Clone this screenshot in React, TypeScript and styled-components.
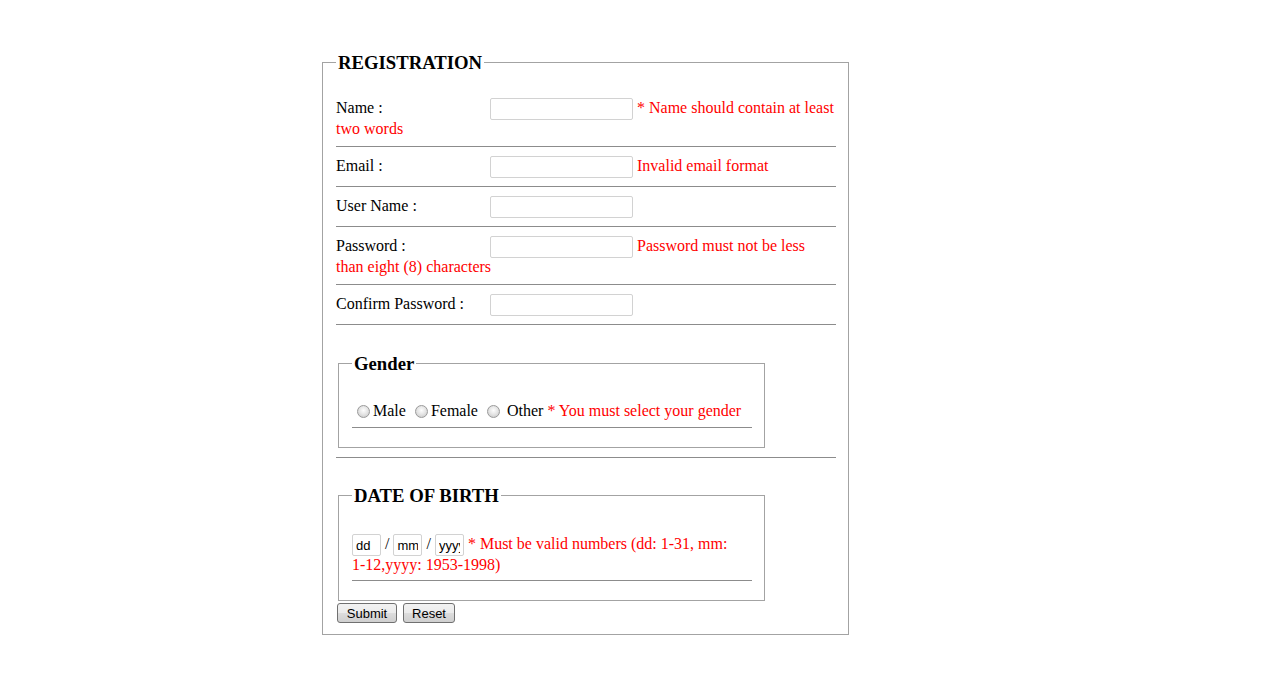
import { createGlobalStyle } from 'styled-components'
import styled from 'styled-components'

const GlobalStyle = createGlobalStyle`
  body {
    margin: 0;
    background: #fff;
    font-family: 'Liberation Serif', 'Times New Roman', serif;
    font-size: 16px;
    color: #000;
  }
`

const Page = styled.div`
  padding: 52px 0 40px 322px;
`

const Fieldset = styled.fieldset<{ $inner?: boolean }>`
  margin: ${p => (p.$inner ? '0 2px' : '0')};
  width: ${p => (p.$inner ? '400px' : '500px')};
  border: 1px solid #a3a3a3;
  padding: ${p => (p.$inner ? '0 12px 19px 13px' : '16px 12px 11px 13px')};
  line-height: 18px;
`

const Legend = styled.legend`
  padding: 0 2px;
  font-size: 18.72px;
  font-weight: bold;
  line-height: 21px;
`

const Row = styled.div`
  padding: 9px 0 8px;
  border-bottom: 1px solid #8c8c8c;
`

const GroupRow = styled.div<{ $top: number; $last?: boolean }>`
  padding: ${p => p.$top}px 0 ${p => (p.$last ? '0' : '9px')};
  border-bottom: ${p => (p.$last ? 'none' : '1px solid #8c8c8c')};
`

const GroupLine = styled.div<{ $top: number; $bottom: number }>`
  margin-top: ${p => p.$top}px;
  padding-bottom: ${p => p.$bottom}px;
  border-bottom: 1px solid #8c8c8c;
`

const Label = styled.label`
  display: inline-block;
  width: 154px;
`

const TextInput = styled.input`
  box-sizing: border-box;
  width: 143px;
  height: 22px;
  margin: 0;
  padding: 0 3px;
  border: 1px solid #d2d2d2;
  border-radius: 2px;
  vertical-align: middle;
  font: 13px 'Liberation Sans', Arial, sans-serif;
`

const DateInput = styled(TextInput)`
  width: 29px;
  padding: 0 3px;
`

const Error = styled.span`
  color: #f00;
`

const NoWrap = styled.span`
  white-space: nowrap;
`

const Radio = styled.input`
  appearance: none;
  box-sizing: border-box;
  width: 13px;
  height: 13px;
  margin: 0 3px 0 5px;
  border: 1px solid #9a9a9a;
  border-radius: 50%;
  background: radial-gradient(circle at 50% 40%, #fdfdfd 0%, #e6e6e6 45%, #c4c4c4 100%);
  vertical-align: middle;
  position: relative;
  top: -1px;
`

const ButtonBar = styled.div`
  display: flex;
  gap: 6px;
  padding: 2px 0 0 1px;
`

const Button = styled.button<{ $w: number }>`
  box-sizing: border-box;
  width: ${p => p.$w}px;
  height: 20px;
  padding: 0;
  border: 1px solid #707070;
  border-radius: 3px;
  background: linear-gradient(#f2f2f2 0%, #ebebeb 50%, #dddddd 51%, #cfcfcf 100%);
  font: 13px 'Liberation Sans', Arial, sans-serif;
  color: #000;
`

const fields = [
  { label: 'Name :', error: '* Name should contain at least two words', type: 'text' },
  { label: 'Email :', error: 'Invalid email format', type: 'text' },
  { label: 'User Name :', error: '', type: 'text' },
  { label: 'Password :', error: 'Password must not be less than eight (8) characters', type: 'password' },
  { label: 'Confirm Password :', error: '', type: 'password' }
]

export default function App() {
  return (
    <Page>
      <GlobalStyle />
      <form onSubmit={e => e.preventDefault()}>
        <Fieldset>
          <Legend>REGISTRATION</Legend>
          {fields.map(f => (
            <Row key={f.label}>
              <Label>{f.label}</Label>
              <TextInput type={f.type} />
              {f.error && (
                <>
                  {' '}
                  <Error>{f.error}</Error>
                </>
              )}
            </Row>
          ))}

          <GroupRow $top={28}>
            <Fieldset $inner>
              <Legend>Gender</Legend>
              <GroupLine $top={28} $bottom={7}>
                <Radio type="radio" name="gender" id="male" />
                <label htmlFor="male">Male</label>{' '}
                <Radio type="radio" name="gender" id="female" />
                <label htmlFor="female">Female</label>{' '}
                <Radio type="radio" name="gender" id="other" />{' '}
                <label htmlFor="other">Other</label>{' '}
                <Error>* You must select your gender</Error>
              </GroupLine>
            </Fieldset>
          </GroupRow>

          <GroupRow $top={27} $last>
            <Fieldset $inner>
              <Legend>DATE OF BIRTH</Legend>
              <GroupLine $top={28} $bottom={6}>
                <DateInput defaultValue="dd" /> / <DateInput defaultValue="mm" /> /{' '}
                <DateInput defaultValue="yyyy" />{' '}
                <Error>
                  * Must be valid numbers (dd: 1-31, mm: <NoWrap>1-12,yyyy:</NoWrap> 1953-1998)
                </Error>
              </GroupLine>
            </Fieldset>
          </GroupRow>

          <ButtonBar>
            <Button $w={60} type="submit">Submit</Button>
            <Button $w={52} type="reset">Reset</Button>
          </ButtonBar>
        </Fieldset>
      </form>
    </Page>
  )
}
